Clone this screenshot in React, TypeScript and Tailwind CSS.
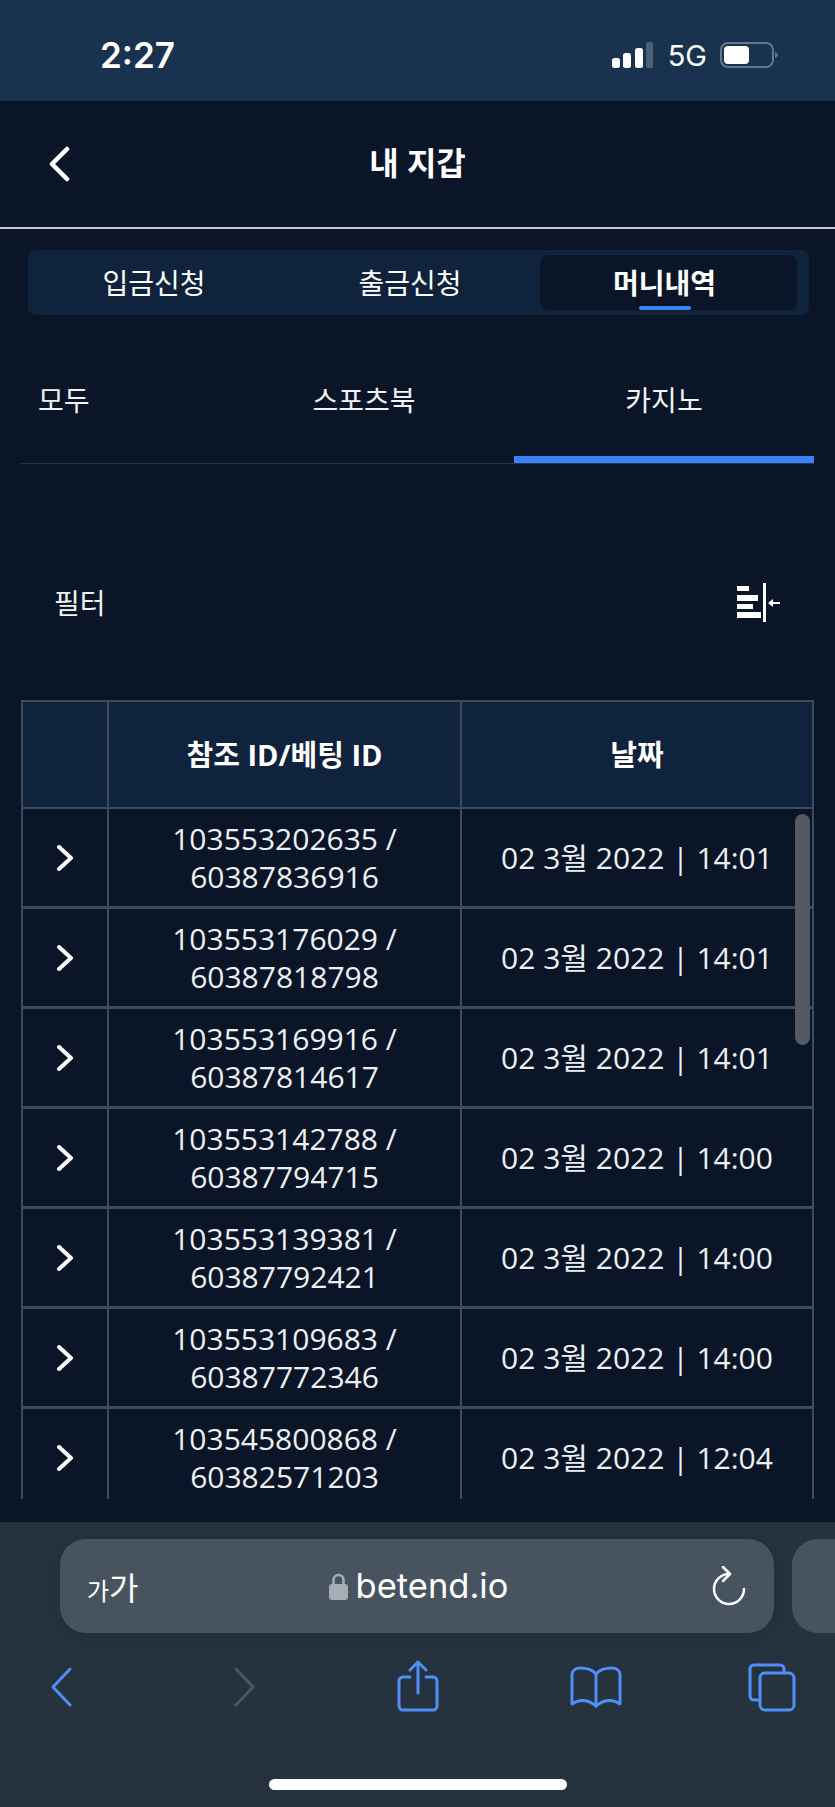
const rows = [
  ["103553202635", "60387836916", "14:01"],
  ["103553176029", "60387818798", "14:01"],
  ["103553169916", "60387814617", "14:01"],
  ["103553142788", "60387794715", "14:00"],
  ["103553139381", "60387792421", "14:00"],
  ["103553109683", "60387772346", "14:00"],
  ["103545800868", "60382571203", "12:04"],
];

function StatusBar() {
  return (
    <div className="h-[101px] shrink-0 bg-[#18324f] flex items-center justify-between pl-[100px] pr-[57px] font-['Inter',sans-serif] text-white">
      <span className="text-[35px] font-semibold leading-none mt-[9px]">2:27</span>
      <div className="flex items-center mt-[9px]">
        <svg width="42" height="26" viewBox="0 0 42 26" className="mr-[14px]">
          <rect x="0" y="16" width="8" height="10" rx="2.5" fill="#fff" />
          <rect x="11" y="11" width="8" height="15" rx="2.5" fill="#fff" />
          <rect x="23" y="6" width="8" height="20" rx="2.5" fill="#fff" />
          <rect x="34" y="0" width="7" height="26" rx="2" fill="#4a6078" />
        </svg>
        <span className="text-[29px] leading-none mr-[13px]">5G</span>
        <svg width="58" height="26" viewBox="0 0 58 26">
          <rect x="1" y="1" width="52" height="24" rx="7" fill="none" stroke="#62778e" strokeWidth="2" />
          <rect x="4" y="4" width="25" height="18" rx="4" fill="#fff" />
          <path d="M55 10 c2 1 3 2 3 3 s-1 2 -3 3 z" fill="#62778e" />
        </svg>
      </div>
    </div>
  );
}

function Tabs() {
  return (
    <div className="mt-[21px] ml-[28px] w-[781px] h-[65px] rounded-[8px] bg-[#0f233d] flex items-center pr-[12px] text-[28px] text-white">
      <div className="w-[252px] text-center">입금신청</div>
      <div className="w-[260px] text-center">출금신청</div>
      <div className="relative w-[257px] h-[55px] rounded-[8px] bg-[#0a1628] flex items-center justify-center pr-[8px] font-bold">
        머니내역
        <div className="absolute bottom-0 left-[99px] w-[52px] h-[4px] rounded-full bg-[#3b82f6]" />
      </div>
    </div>
  );
}

function SubTabs() {
  return (
    <div className="mt-[22px] mx-[21px] flex h-[127px] border-b border-[#2a3646] text-[28px] text-[#f1f3f5]">
      <div className="w-[193px] h-[126px] pl-[17px] flex items-center">모두</div>
      <div className="w-[300px] h-[126px] flex items-center justify-center">스포츠북</div>
      <div className="w-[300px] h-[126px] pt-[7px] flex items-center justify-center border-b-[7px] border-[#3b82f6]">카지노</div>
    </div>
  );
}

function FilterRow() {
  return (
    <div className="mt-[100px] mb-[58px] h-[78px] flex items-center justify-between pl-[54px] pr-[55px] text-[28px] text-[#f1f3f5]">
      <span>필터</span>
      <svg width="43" height="40" viewBox="0 0 43 40" fill="#fff">
        <rect x="0" y="3" width="12" height="5" />
        <rect x="0" y="12" width="21" height="6" />
        <rect x="0" y="21" width="16" height="5" />
        <rect x="0" y="29" width="24" height="6" />
        <rect x="26" y="0" width="3" height="39" />
        <path d="M31 20 l5 -4 v3 h7 v2 h-7 v3 z" />
      </svg>
    </div>
  );
}

function Table() {
  return (
    <div className="relative mx-[21px] h-[799px] overflow-hidden border-x-2 border-t-2 border-[#3d4b5e] text-white">
      <div className="flex h-[107px] bg-[#0f233d] border-b-2 border-[#3d4b5e] text-[29px] font-bold">
        <div className="w-[86px] shrink-0 border-r-2 border-[#3d4b5e]" />
        <div className="w-[353px] shrink-0 border-r-2 border-[#3d4b5e] flex items-center justify-center">참조 ID/베팅 ID</div>
        <div className="flex-1 flex items-center justify-center">날짜</div>
      </div>
      {rows.map(([ref, bet, time]) => (
        <div key={ref} className="flex h-[100px] border-b-[3px] border-[#3d4b5e] text-[30px] leading-[38px] text-[#eef1f4]">
          <div className="w-[86px] shrink-0 border-r-2 border-[#3d4b5e] flex items-center justify-center">
            <svg width="18" height="26" viewBox="0 0 18 26" fill="none" stroke="#fff" strokeWidth="4" strokeLinecap="round" strokeLinejoin="round">
              <path d="M3 2 L15 13 L3 24" />
            </svg>
          </div>
          <div className="w-[353px] shrink-0 border-r-2 border-[#3d4b5e] flex flex-col items-center justify-center">
            <div>{ref} /</div>
            <div>{bet}</div>
          </div>
          <div className="flex-1 flex items-center justify-center whitespace-nowrap">02 3월 2022 | {time}</div>
        </div>
      ))}
      {/* overlay scrollbar */}
      <div className="absolute top-[112px] right-[2px] w-[15px] h-[231px] rounded-full bg-[#55595f]" />
    </div>
  );
}

function BrowserBar() {
  return (
    <div className="relative mt-auto h-[285px] shrink-0 bg-[#26333f] font-['Inter','Noto_Sans_CJK_KR',sans-serif]">
      <div className="flex gap-[18px] pl-[60px] pt-[17px]">
        <div className="w-[714px] h-[94px] shrink-0 rounded-[26px] bg-[#475460] flex items-center pl-[27px] pr-[28px] text-white shadow-[0_4px_20px_rgba(0,0,0,0.12)]">
          <span className="w-[60px] flex items-baseline font-['Noto_Sans_CJK_KR',sans-serif]">
            <span className="text-[24px] leading-none">가</span>
            <span className="text-[32px] leading-none">가</span>
          </span>
          <div className="flex-1 flex items-center justify-center gap-[8px] pr-[22px]">
            <svg width="19" height="27" viewBox="0 0 19 27" fill="none">
              <path d="M4.5 12 V7 a5 5 0 0 1 10 0 V12" stroke="#a7adb6" strokeWidth="2.5" />
              <rect x="0" y="11" width="19" height="16" rx="3" fill="#a7adb6" />
            </svg>
            <span className="text-[34.5px] leading-none">betend.io</span>
          </div>
          <svg width="34" height="40" viewBox="0 0 34 40" fill="none" stroke="#fff" strokeWidth="2.5" strokeLinecap="round" strokeLinejoin="round">
            <path d="M17 8 A15 15 0 1 0 32 23" />
            <path d="M11 1 L18 8 L11 15" />
          </svg>
        </div>
        <div className="w-[60px] h-[94px] shrink-0 rounded-l-[26px] bg-[#475460]" />
      </div>
      <div className="flex items-center justify-between px-[31px] mt-[28px] h-[52px]">
        <div className="w-[60px] flex justify-center">
          <svg width="23" height="40" viewBox="0 0 23 40" fill="none" stroke="#4f8ff7" strokeWidth="3" strokeLinecap="round" strokeLinejoin="round">
            <path d="M20 2 L3 20 L20 38" />
          </svg>
        </div>
        <div className="w-[60px] pl-[10px] flex justify-center">
          <svg width="23" height="40" viewBox="0 0 23 40" fill="none" stroke="#4c5660" strokeWidth="3" strokeLinecap="round" strokeLinejoin="round">
            <path d="M3 2 L20 20 L3 38" />
          </svg>
        </div>
        <div className="w-[60px] flex justify-center mt-[-3px]">
          <svg width="42" height="52" viewBox="0 0 42 52" fill="none" stroke="#4f8ff7" strokeWidth="3" strokeLinecap="round" strokeLinejoin="round">
            <path d="M13 17 H6 a4 4 0 0 0 -4 4 V46 a4 4 0 0 0 4 4 H36 a4 4 0 0 0 4 -4 V21 a4 4 0 0 0 -4 -4 H29" />
            <path d="M21 33 V2 M13 10 L21 2 L29 10" />
          </svg>
        </div>
        <div className="w-[60px] flex justify-center">
          <svg width="52" height="42" viewBox="0 0 52 42" fill="none" stroke="#4f8ff7" strokeWidth="3" strokeLinecap="round" strokeLinejoin="round">
            <path d="M26 8 C22 3 16 2 10 2 C5 2 2 5 2 9 V38 C9 33 18 33 26 40 C34 33 43 33 50 38 V9 C50 5 47 2 42 2 C36 2 30 3 26 8 Z" />
            <path d="M26 8 V40" />
          </svg>
        </div>
        <div className="w-[60px] pr-[4px] flex justify-center">
          <svg width="48" height="49" viewBox="0 0 48 49" fill="none" stroke="#4f8ff7" strokeWidth="3" strokeLinecap="round" strokeLinejoin="round">
            <path d="M36 9 V6 a4 4 0 0 0 -4 -4 H6 a4 4 0 0 0 -4 4 V33 a4 4 0 0 0 4 4 H11" />
            <rect x="12" y="10" width="34" height="37" rx="5" />
          </svg>
        </div>
      </div>
      {/* home indicator */}
      <div className="absolute left-[269px] bottom-[17px] w-[298px] h-[11px] rounded-full bg-white" />
    </div>
  );
}

export default function App() {
  return (
    <div className="w-[835px] h-[1807px] overflow-hidden flex flex-col bg-[#0a1628] font-['Open_Sans','Noto_Sans_CJK_KR',sans-serif]">
      <StatusBar />
      {/* page header */}
      <div className="h-[128px] shrink-0 border-b-2 border-[#c4c7cb] flex items-center relative">
        <svg width="22" height="36" viewBox="0 0 22 36" fill="none" stroke="#fff" strokeWidth="4.5" strokeLinecap="round" strokeLinejoin="round" className="absolute left-[48px] top-[45px]">
          <path d="M19 3 L4 18 L19 33" />
        </svg>
        <div className="w-full text-center text-[32px] font-bold text-white mt-[-3px]">내 지갑</div>
      </div>
      <Tabs />
      <SubTabs />
      <FilterRow />
      <Table />
      <BrowserBar />
    </div>
  );
}
